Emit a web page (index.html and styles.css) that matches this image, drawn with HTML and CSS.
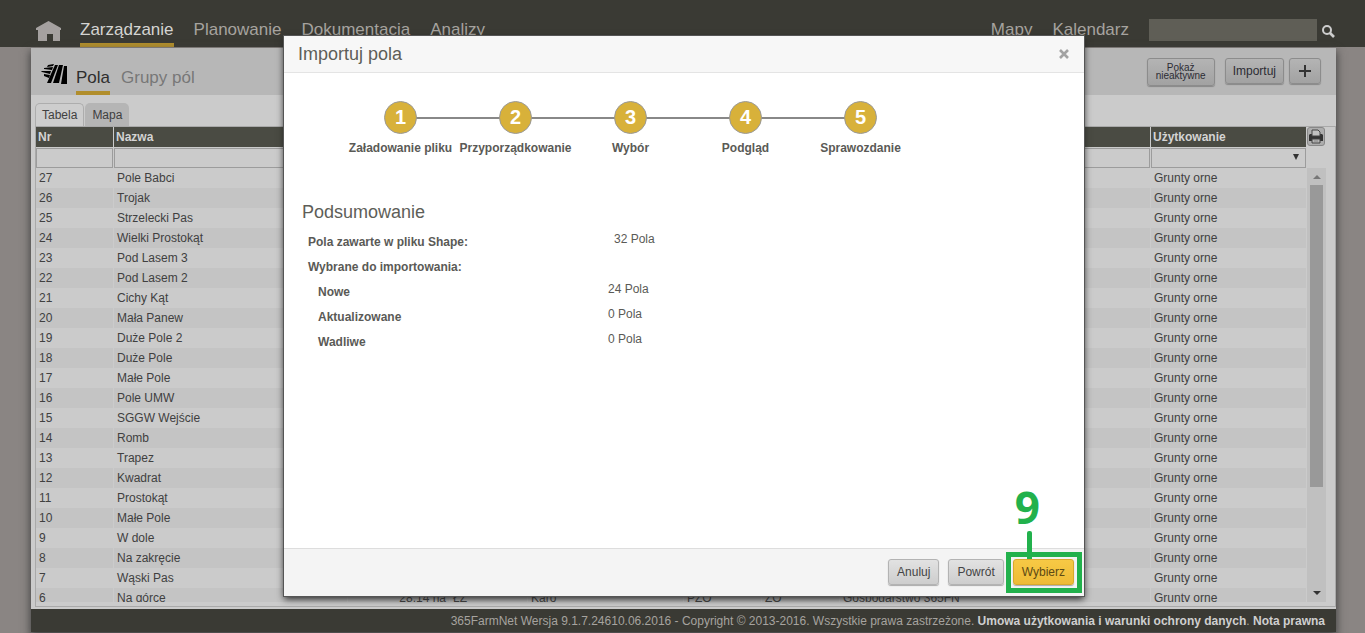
FILE: index.html
```html
<!DOCTYPE html>
<html lang="pl">
<head>
<meta charset="utf-8">
<title>365FarmNet</title>
<link rel="stylesheet" href="styles.css">
</head>
<body>
<div class="app">
  <header class="topbar">
    <a class="home" href="#" aria-label="Start"><svg width="26" height="20" viewBox="0 0 26 20"><path d="M12.500 0 25 7v2h-1v11h-7v-7h-6v7H2V9H0V7Z" fill="#a5a1a0"/></svg></a>
    <nav class="nav">
      <a class="active" href="#">Zarządzanie</a>
      <a href="#">Planowanie</a>
      <a href="#">Dokumentacja</a>
      <a href="#">Analizy</a>
    </nav>
    <nav class="nav nav-right">
      <a href="#">Mapy</a>
      <a href="#">Kalendarz</a>
    </nav>
    <input class="search" type="text" aria-label="Szukaj">
    <button class="search-btn" aria-label="Szukaj"><svg width="13" height="13" viewBox="0 0 13 13"><circle cx="5" cy="5" r="4" fill="none" stroke="#cdcdcd" stroke-width="2"/><path d="m8 8 4 4" stroke="#cdcdcd" stroke-width="2.6"/></svg></button>
  </header>

  <main class="panel">
    <div class="subbar">
      <svg class="field-icon" width="26" height="21" viewBox="0 0 26 21"><path d="M7 1 13 0 12 2 6 3ZM3 4l9-1-1 3-8-1ZM0 7l10 0-1 3-8-2ZM3 10l6 1-1 3-5-2ZM14 1h3L10 19H6ZM18 1h4L18 19h-6ZM23 2h3v18h-6Z"/></svg>
      <nav class="subnav">
        <a class="active" href="#">Pola</a>
        <a href="#">Grupy pól</a>
      </nav>
      <div class="actions">
        <button class="btn dim small">Pokaż<br>nieaktywne</button>
        <button class="btn dim">Importuj</button>
        <button class="btn dim plus" aria-label="Dodaj"><svg width="12" height="12" viewBox="0 0 12 12"><path d="M6 0v12M0 6h12" stroke="#333" stroke-width="2"/></svg></button>
      </div>
    </div>

    <div class="tabs">
      <button class="tab current">Tabela</button>
      <button class="tab">Mapa</button>
    </div>

    <section class="grid-box">
      <div class="grid-wrap">
        <table class="fields">
          <colgroup><col class="c-nr"><col class="c-name"><col class="c-area"><col class="c-sm"><col class="c-md"><col class="c-sm"><col class="c-sm"><col><col class="c-use"></colgroup>
          <thead>
            <tr class="heads"><th>Nr</th><th>Nazwa</th><th></th><th></th><th></th><th></th><th></th><th></th><th>Użytkowanie</th></tr>
            <tr class="filters">
              <td><input type="text" aria-label="Filtr: Nr"></td>
              <td colspan="7"><input type="text" aria-label="Filtr: Nazwa"></td>
              <td><div class="pick"><select aria-label="Filtr: Użytkowanie"><option></option></select><svg width="6" height="6" viewBox="0 0 6 6"><path d="M0 0h6L3 6Z" fill="#333"/></svg></div></td>
            </tr>
          </thead>
          <tbody id="rows"></tbody>
        </table>
      </div>
      <div class="gutter">
        <button class="print" aria-label="Drukuj"><svg width="14" height="15" viewBox="0 0 14 15"><path d="M1 5h12l1 1v6H0V6Z" fill="#333"/><path d="M3 1h6l2 2v4H3Z" fill="#c0c0c0" stroke="#444"/><path d="M3 10h8v4H3Z" fill="#b5b5b5" stroke="#444"/><path d="M5 12h4" stroke="#888"/></svg></button>
        <div class="scroll">
          <svg width="8" height="4" viewBox="0 0 8 4"><path d="M4 0l4 4H0Z" fill="#777"/></svg>
          <div class="thumb"></div>
          <svg width="8" height="4" viewBox="0 0 8 4"><path d="M0 0h8L4 4Z" fill="#333"/></svg>
        </div>
      </div>
    </section>

    <footer class="foot">365FarmNet Wersja 9.1.7.24610.06.2016 - Copyright © 2013-2016. Wszystkie prawa zastrzeżone. <a href="#">Umowa użytkowania i warunki ochrony danych</a>. <a href="#">Nota prawna</a></footer>
  </main>
</div>

<div class="overlay">
  <div class="modal" role="dialog" aria-labelledby="dlg-title">
    <div class="modal-head">
      <h1 id="dlg-title">Importuj pola</h1>
      <button class="close" aria-label="Zamknij"><svg width="10" height="10" viewBox="0 0 10 10"><path d="m1 1 8 8M9 1 1 9" stroke="#a3a3a3" stroke-width="2.6"/></svg></button>
    </div>
    <div class="modal-body">
      <ol class="steps">
        <li><span class="num">1</span><span class="cap">Załadowanie pliku</span></li>
        <li><span class="num">2</span><span class="cap">Przyporządkowanie</span></li>
        <li><span class="num">3</span><span class="cap">Wybór</span></li>
        <li><span class="num">4</span><span class="cap">Podgląd</span></li>
        <li><span class="num">5</span><span class="cap">Sprawozdanie</span></li>
      </ol>
      <h2>Podsumowanie</h2>
      <table class="summary">
        <tr><th>Pola zawarte w pliku Shape:</th><td class="total">32 Pola</td></tr>
        <tr><th>Wybrane do importowania:</th><td></td></tr>
        <tr><th class="sub">Nowe</th><td>24 Pola</td></tr>
        <tr><th class="sub">Aktualizowane</th><td>0 Pola</td></tr>
        <tr><th class="sub">Wadliwe</th><td>0 Pola</td></tr>
      </table>
    </div>
    <div class="modal-foot">
      <button class="btn">Anuluj</button>
      <button class="btn">Powrót</button>
      <div class="marked">
        <button class="btn primary">Wybierz</button>
        <div class="frame"></div>
        <div class="stem"></div>
        <div class="mark">9</div>
      </div>
    </div>
  </div>
</div>
<script src="app.js"></script>
</body>
</html>
```
FILE: styles.css
```css
* { box-sizing: border-box; }
body { margin: 0; background: #8a8583; font: 12px/20px "Liberation Sans", Arial, sans-serif; color: #404040; }
a { color: inherit; text-decoration: none; }
button, input, select { font: inherit; color: inherit; margin: 0; padding: 0; border-radius: 0; }
h1, h2 { margin: 0; font-size: 18px; font-weight: normal; color: #5e5e58; }
svg { display: block; }

.app { height: 100vh; display: flex; flex-direction: column; overflow: hidden; }
.topbar { height: 47px; flex: none; display: flex; align-items: flex-end; padding: 0 30px 0 36px; background: #3a3a34; }
.home { margin: 0 18px 6px 0; }
.nav { display: flex; gap: 20px; font-size: 17px; color: #a6a39f; }
.nav a { height: 27px; line-height: 19px; border-bottom: 4px solid transparent; }
.nav a.active { color: #d4d4d2; border-color: #b18e2c; }
.nav-right { margin-left: auto; }
.search { width: 168px; height: 22px; margin: 0 5px 6px 20px; border: 0; background: #5f5e56; }
.search-btn { border: 0; background: none; margin-bottom: 9px; }

.panel { flex: 1; min-height: 0; display: flex; flex-direction: column; margin: 1px 29px 1px 31px; background: #cbcbcb; box-shadow: 0 4px 8px 1px #444; }
.subbar { height: 47px; flex: none; display: flex; align-items: flex-end; padding: 0 15px 0 10px; background: #b7b7b7; }
.field-icon { margin: 0 9px 10px 0; }
.subnav { display: flex; gap: 11px; font-size: 17px; color: #777; }
.subnav a { height: 27px; line-height: 20px; border-bottom: 4px solid transparent; }
.subnav a.active { color: #2e2e2e; border-color: #b18e2c; }
.actions { margin-left: auto; align-self: flex-start; display: flex; padding-top: 10px; gap: 5px; }

.btn { height: 26px; padding: 0 8px; border: 1px solid #b3b3b3; border-radius: 3px; background: linear-gradient(#e2e2e2, #cdcdcd); box-shadow: 0 1px 1px #aaa; color: #444; line-height: 24px; }
.btn.dim { padding: 0 7px; border-color: #8c8c8c; background: linear-gradient(#b4b4b4, #a2a2a2); box-shadow: 0 1px 1px #888; color: #2c2c34; }
.btn.dim.small { width: 68px; height: 28px; margin-right: 5px; padding: 0; font-size: 10px; line-height: 8px; }
.btn.dim.plus { width: 32px; padding: 0 9px; }
.btn.primary { border-color: #d8a92c; background: linear-gradient(#f7c945, #eebb36); color: #5c4a14; }

.tabs { flex: none; display: flex; gap: 1px; padding: 8px 4px 0; height: 31px; }
.tab { height: 23px; padding: 0 7px; border: 0; border-radius: 5px 5px 0 0; background: #b5b5b5; }
.tab.current { padding: 0 6px; border: 1px solid #adadad; border-bottom: 0; background: #cdcdcd; }

.grid-box { flex: 1; min-height: 0; display: flex; gap: 1px; margin: 0 0 2px 4px; padding-bottom: 4px; border: 1px solid #a9a9a9; }
.grid-wrap { flex: 1; min-width: 0; overflow: hidden; }
.fields { width: 100%; table-layout: fixed; border-collapse: separate; border-spacing: 0; }
.c-nr { width: 78px; }
.c-name { width: 234px; }
.c-area { width: 102px; }
.c-sm { width: 78px; }
.c-md { width: 156px; }
.c-use { width: 155px; }
.fields th { height: 21px; padding: 0 2px; text-align: left; color: #d4d4d4; background: #4a4b43; border-right: 1px solid #cbcbcb; border-bottom: 1px solid #cbcbcb; }
.fields td { height: 20px; padding: 0 3px; white-space: nowrap; border-right: 1px solid #cbcbcb; }
.fields th:last-child, .fields td:last-child { border-right: 0; }
.fields tbody tr:nth-child(even) { background: #c4c4c4; }
.fields td.area { text-align: right; }
.fields .filters td { padding: 0; }
.filters input, .filters select { display: block; width: 100%; height: 20px; border: 1px solid #9c9c9c; background: #cbcbcb; appearance: none; }
.pick { position: relative; }
.pick svg { position: absolute; right: 7px; top: 6px; }

.gutter { width: 28px; display: flex; flex-direction: column; }
.print { width: 18px; height: 19px; flex: none; margin-bottom: 22px; padding: 1px; border: 1px solid #888; border-radius: 3px; background: #adadad; }
.scroll { width: 19px; flex: 1; min-height: 0; display: flex; flex-direction: column; align-items: center; padding: 7px 0; background: #c0c0c0; }
.thumb { width: 13px; height: 72%; margin: 6px 0 auto; background: #999; }

.foot { flex: none; height: 23px; padding: 0 11px; text-align: right; line-height: 24px; background: #3a3a34; color: #a6a39f; }
.foot a { font-weight: bold; color: #cfcfcf; }

.overlay { position: absolute; inset: 0; display: flex; justify-content: center; padding: 36px 0 37px 3px; }
.modal { width: 800px; display: flex; flex-direction: column; background: #fff; box-shadow: 0 0 0 1px #555, 0 3px 7px #222; color: #5a5a56; }
.modal-head { height: 37px; flex: none; display: flex; align-items: center; justify-content: space-between; padding: 0 15px 0 14px; background: #f7f7f7; border-bottom: 1px solid #e4e4e4; }
.close { border: 0; background: none; }
.modal-body { flex: 1; padding: 28px 18px 0; }
.steps { display: flex; list-style: none; margin: 0 0 44px; padding: 0 0 0 41px; }
.steps li { position: relative; width: 115px; display: flex; flex-direction: column; align-items: center; gap: 4px; font-weight: bold; }
.steps li:not(:last-child)::after { content: ""; position: absolute; left: 50%; top: 16px; width: 100%; height: 2px; background: #888; }
.num { position: relative; z-index: 1; width: 33px; height: 33px; border: 1px solid #999; border-radius: 50%; background: #d8b13a; color: #fff; font-size: 20px; text-align: center; line-height: 30px; }
.cap { white-space: nowrap; }
h2 { margin-bottom: 7px; }
.summary { width: 100%; border-spacing: 0; }
.summary th { width: 306px; height: 25px; padding: 0 0 0 6px; text-align: left; }
.summary .sub { padding-left: 16px; }
.summary td { padding: 0 0 5px; line-height: 20px; }
.summary .total { padding-left: 6px; }
.modal-foot { flex: none; height: 48px; display: flex; align-items: flex-start; justify-content: flex-end; gap: 9px; padding: 10px 10px 0; background: #f4f4f4; border-top: 1px solid #ddd; }
.marked { position: relative; }
.marked .btn { display: block; }
.frame { position: absolute; inset: -7px -8px -8px -7px; border: 5px solid #22b14c; pointer-events: none; }
.stem { position: absolute; left: 14px; bottom: 100%; width: 5px; height: 28px; border-radius: 2px 2px 0 0; background: #22b14c; }
.mark { position: absolute; left: 2px; bottom: 56px; font: bold 44px/44px "Open Sans", "Noto Sans", sans-serif; color: #22b14c; }
```
FILE: app.js
```js
const names = ["Pole Babci", "Trojak", "Strzelecki Pas", "Wielki Prostokąt", "Pod Lasem 3", "Pod Lasem 2",
  "Cichy Kąt", "Mała Panew", "Duże Pole 2", "Duże Pole", "Małe Pole", "Pole UMW", "SGGW Wejście", "Romb",
  "Trapez", "Kwadrat", "Prostokąt", "Małe Pole", "W dole", "Na zakręcie", "Wąski Pas", "Na górce"];
const details = { 6: ["28.14 ha", "ŁZ", "Karo", "PZO", "ZO", "Gospodarstwo 365FN"] };
const body = document.getElementById("rows");
names.forEach((name, i) => {
  const nr = 27 - i;
  const mid = details[nr] || ["", "", "", "", "", ""];
  const tr = body.insertRow();
  [nr, name, ...mid, "Grunty orne"].forEach((text, col) => {
    const td = tr.insertCell();
    td.textContent = text;
    if (col === 2) td.className = "area";
  });
});
```
